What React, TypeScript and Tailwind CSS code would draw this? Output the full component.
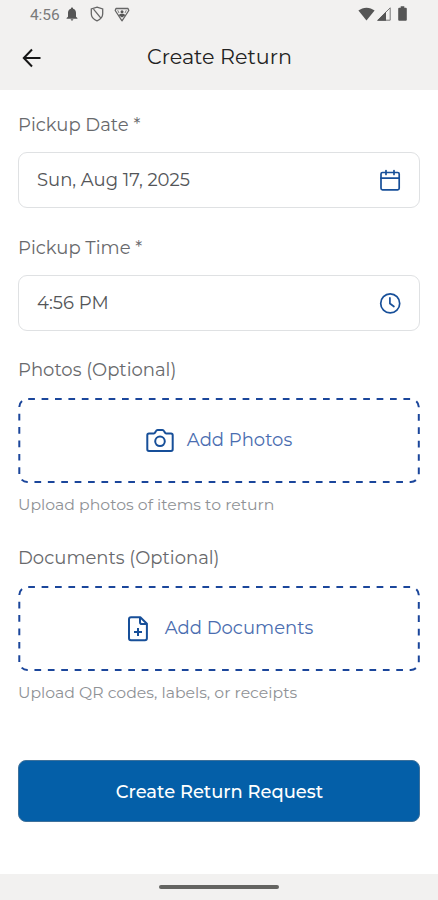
import type { ReactNode } from "react";

interface FieldProps {
  label: string;
  value: string;
  icon: ReactNode;
}

interface UploadProps {
  label: string;
  hint: string;
  children: ReactNode;
}

function StatusBar() {
  return (
    <div className="flex h-7 items-center justify-between pl-[30px] pr-[30px] text-[#555]">
      <div className="flex items-center">
        <span className="w-[36px] pt-px text-[15.500px] leading-7 tracking-[-0.1px] text-[#7a7a7a] font-[Roboto,sans-serif]">
          4:56
        </span>
        <svg className="h-[14px] w-[12px]" viewBox="0 0 12 14" fill="#555">
          <path d="M6 .5c.7 0 1.1.5 1.1 1.2C9 2.3 10 3.8 10 5.7v4.1l1.4 1.3v.6H.6v-.6L2 9.800V5.700C2 3.800 3 2.300 4.900 1.700 4.900 1 5.300.5 6 .5ZM4.700 12.300h2.600c0 .8-.6 1.300-1.300 1.300s-1.300-.5-1.300-1.300Z" />
        </svg>
        <svg
          className="ml-[12px] h-4 w-[14px]"
          viewBox="0 0 14 16"
          fill="none"
          stroke="#666"
          strokeWidth="1.300"
        >
          <path d="M7 1.200 12.700 3v4.800c0 3-2.100 5.700-5.700 7-3.600-1.300-5.700-4-5.700-7V3Z" />
          <path d="m3.500 3.200 7.400 8.900" />
        </svg>
        <svg
          className="ml-[10px] h-[15px] w-4"
          viewBox="0 0 16 15"
          fill="none"
          stroke="#666"
          strokeWidth="1.300"
          strokeLinejoin="round"
        >
          <path d="M2 1.500h12l.8 2L8 13.800 1.200 3.500Z" />
          <circle cx="8" cy="4.800" r="1.500" fill="#555" stroke="none" />
          <path d="M4.600 8.200C5.500 7 6.500 6.700 8 6.700s2.500.3 3.400 1.500L8 10.500Z" fill="#555" stroke="none" />
          <path d="M3.700 3.200 5 6M12.300 3.200 11 6" strokeWidth=".8" />
        </svg>
      </div>
      <div className="flex items-center pb-px">
        <svg className="h-[14px] w-[17px]" viewBox="0 0 17 14" fill="#555">
          <path d="M.4 3.600C5-.3 12-.3 16.600 3.600L8.500 13.500Z" />
        </svg>
        <svg className="ml-[2px] h-[14px] w-[14px]" viewBox="0 0 14 14">
          <path d="M.8 13.200 13.200.8v12.400Z" fill="none" stroke="#777" strokeWidth="1" />
          <path d="M0 13.700 9 4.700v9Z" fill="#555" />
        </svg>
        <svg className="ml-[7px] mr-[1px] h-[15px] w-[9px]" viewBox="0 0 9 15" fill="#555">
          <path d="M2.700.3h3.600v1.500h1.500q1 0 1 1v11q0 1-1 1H1.200q-1 0-1-1v-11q0-1 1-1h1.500Z" />
        </svg>
      </div>
    </div>
  );
}

function CalendarIcon() {
  return (
    <svg
      className="h-6 w-6"
      viewBox="0 0 24 24"
      fill="none"
      stroke="#174f99"
      strokeWidth="1.700"
      strokeLinecap="round"
      strokeLinejoin="round"
    >
      <rect x="3" y="4.500" width="18.200" height="17.300" rx="1.500" />
      <path d="M3 10.200h18.200M8 2.500v4M16 2.500v4" />
    </svg>
  );
}

function ClockIcon() {
  return (
    <svg
      className="h-6 w-6"
      viewBox="0 0 24 24"
      fill="none"
      stroke="#174f99"
      strokeWidth="1.700"
      strokeLinecap="round"
      strokeLinejoin="round"
    >
      <circle cx="12.200" cy="12.400" r="9.500" />
      <path d="M11.900 6.900v5.600l4 3" />
    </svg>
  );
}

function CameraIcon() {
  return (
    <svg
      className="h-[26px] w-[28px]"
      viewBox="0 0 28 26"
      fill="none"
      stroke="#174f99"
      strokeWidth="2"
      strokeLinejoin="round"
    >
      <path d="M3 5.500h4.800c.8 0 1.100-.4 1.500-1.200l.6-1.200c.4-.9.9-1.200 1.700-1.200h4.800c.8 0 1.300.3 1.700 1.200l.6 1.200c.4.8.7 1.200 1.500 1.200H25c1 0 1.700.7 1.700 1.700v14c0 1-.7 1.700-1.700 1.700H3c-1 0-1.700-.7-1.700-1.700v-14c0-1 .7-1.700 1.700-1.700Z" />
      <circle cx="14" cy="13.300" r="4.800" />
    </svg>
  );
}

function FilePlusIcon() {
  return (
    <svg
      className="ml-[2px] h-[26px] w-[22px]"
      viewBox="0 0 22 26"
      fill="none"
      stroke="#174f99"
      strokeWidth="2"
      strokeLinejoin="round"
    >
      <path d="M4 1.200h9.300l6.600 6.600v14.400c0 1.200-.8 2-2 2H4c-1.200 0-2-.8-2-2v-19c0-1.200.8-2 2-2Z" />
      <path d="M13 1.400v4.900c0 1.200.6 1.800 1.800 1.800h4.900" />
      <path d="M11 12.100v8M7 16.100h8" />
    </svg>
  );
}

function Label({ children }: { children: ReactNode }) {
  return (
    <p className="h-6 whitespace-nowrap text-[18px] leading-6 text-[#68696c]">
      {children}
    </p>
  );
}

function Field({ label, value, icon }: FieldProps) {
  return (
    <div>
      <Label>{label}</Label>
      <div className="mt-[15px] flex h-14 items-center justify-between rounded-[9px] border-[1.500px] border-[#dfe1e3] bg-white pl-[18px] pr-[17px]">
        <span className="whitespace-nowrap pb-px text-[18px] leading-6 text-[#535558]">
          {value}
        </span>
        {icon}
      </div>
    </div>
  );
}

function Upload({ label, hint, children }: UploadProps) {
  return (
    <div>
      <Label>{label}</Label>
      <button className="relative mt-4 flex h-[85px] w-full items-center justify-center">
        {/* long dashes, starting from the bottom left corner */}
        <svg
          className="absolute inset-0 h-full w-full"
          viewBox="0 0 402 85"
          fill="none"
          stroke="#1b469b"
          strokeWidth="2"
          strokeDasharray="6.700 6.700"
        >
          <path d="M1.300 76V9a8 8 0 0 1 8-8h383.500a8 8 0 0 1 8 8v67a8 8 0 0 1-8 8H9.300a8 8 0 0 1-8-8Z" />
        </svg>
        {children}
      </button>
      <p className="mt-3 h-5 whitespace-nowrap text-[15.700px] leading-5 text-[#8f9296]">
        {hint}
      </p>
    </div>
  );
}

export default function App() {
  return (
    <div className="flex h-[900px] w-full flex-col overflow-hidden bg-white font-[Montserrat,Inter,sans-serif]">
      <header className="h-[90px] shrink-0 bg-[#f2f1f0]">
        <StatusBar />
        <div className="flex h-[60px] items-center">
          <button className="ml-[22px] flex w-[125px] shrink-0">
            <svg
              className="h-5 w-5"
              viewBox="0 0 20 20"
              fill="none"
              stroke="#171717"
              strokeWidth="2"
            >
              <path d="M10 1.500 1.800 10l8.200 8.500M2 10h16.500" />
            </svg>
          </button>
          <h1 className="whitespace-nowrap pb-[2px] text-[20.700px] font-normal leading-7 text-[#222]">
            Create Return
          </h1>
        </div>
      </header>

      <main className="flex flex-1 flex-col px-[18px] pt-[23px]">
        <Field label="Pickup Date *" value="Sun, Aug 17, 2025" icon={<CalendarIcon />} />
        <div className="mt-7">
          <Field label="Pickup Time *" value="4:56 PM" icon={<ClockIcon />} />
        </div>
        <div className="mt-[27px]">
          <Upload label="Photos (Optional)" hint="Upload photos of items to return">
            <CameraIcon />
            <span className="ml-[13px] whitespace-nowrap pb-[2px] text-[18px] leading-6 text-[#4a6db0]">
              Add Photos
            </span>
          </Upload>
        </div>
        <div className="mt-[31px]">
          <Upload label="Documents (Optional)" hint="Upload QR codes, labels, or receipts">
            <FilePlusIcon />
            <span className="ml-4 whitespace-nowrap pb-[2px] text-[18px] leading-6 text-[#4a6db0]">
              Add Documents
            </span>
          </Upload>
        </div>
        <button className="mt-[57px] flex h-[62px] shrink-0 items-center justify-center rounded-lg border border-[#3e719b] bg-[#045fa8] pl-px pt-px text-[17.900px] font-medium leading-6 text-white">
          Create Return Request
        </button>
      </main>

      <footer className="flex h-[26px] shrink-0 justify-center bg-[#f2f1f0] pt-[11px]">
        <div className="h-1 w-[120px] rounded-full bg-[#646461]" />
      </footer>
    </div>
  );
}
